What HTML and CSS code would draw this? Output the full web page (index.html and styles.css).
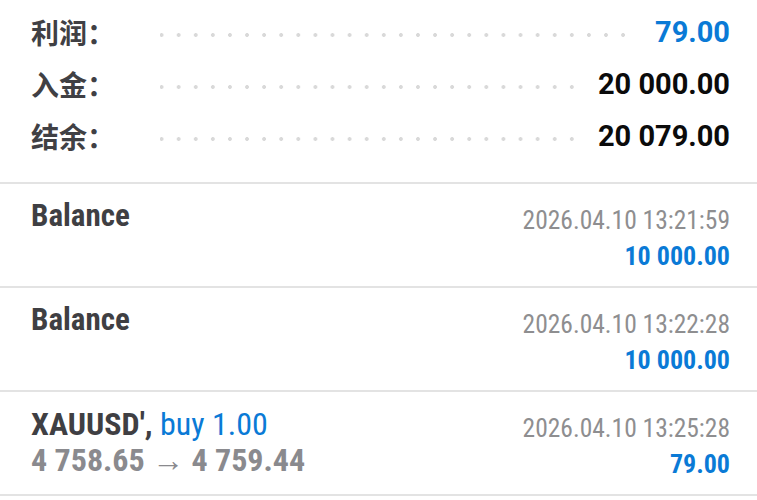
FILE: index.html
```html
<!DOCTYPE html>
<html lang="zh">
<head>
<meta charset="utf-8">
<link rel="stylesheet" href="styles.css">
</head>
<body>
<div class="summary">
  <div class="srow">
    <span class="slabel">利润：</span>
    <span class="dots"></span>
    <span class="sval blue">79.00</span>
  </div>
  <div class="srow">
    <span class="slabel">入金：</span>
    <span class="dots"></span>
    <span class="sval">20 000.00</span>
  </div>
  <div class="srow">
    <span class="slabel">结余：</span>
    <span class="dots"></span>
    <span class="sval">20 079.00</span>
  </div>
</div>
<div class="item">
  <div class="left">
    <div class="title">Balance</div>
  </div>
  <div class="right">
    <div class="date">2026.04.10 13:21:59</div>
    <div class="amount">10 000.00</div>
  </div>
</div>
<div class="item">
  <div class="left">
    <div class="title">Balance</div>
  </div>
  <div class="right">
    <div class="date">2026.04.10 13:22:28</div>
    <div class="amount">10 000.00</div>
  </div>
</div>
<div class="item">
  <div class="left">
    <div class="title deal">XAUUSD', <span class="buy">buy 1.00</span></div>
    <div class="prices">4 758.65 → 4 759.44</div>
  </div>
  <div class="right">
    <div class="date">2026.04.10 13:25:28</div>
    <div class="amount">79.00</div>
  </div>
</div>
</body>
</html>
```

FILE: styles.css
```css
html, body {
  margin: 0;
  padding: 0;
  background: #ffffff;
}

body {
  width: 757px;
  font-family: Roboto, "Noto Sans", sans-serif;
}

.summary {
  padding: 6px 27px 20px 31px;
  border-bottom: 2px solid #e3e3e3;
}

.srow {
  display: flex;
  align-items: center;
  height: 52px;
}

.slabel {
  width: 129px;
  flex: none;
  font-family: "Noto Sans CJK SC", "Noto Sans", sans-serif;
  font-weight: 700;
  font-size: 28px;
  line-height: 52px;
  color: #404044;
}

.dots {
  flex: 1;
  height: 4px;
  margin-top: 6px;
  margin-right: 18px;
  background-image: radial-gradient(circle, #d9d9d9 1.6px, rgba(255,255,255,0) 2.2px);
  background-size: 17.1px 4px;
  background-repeat: repeat-x;
  background-position: -7px 0;
}

.sval {
  flex: none;
  font-family: Roboto, sans-serif;
  font-weight: 700;
  font-size: 29px;
  line-height: 52px;
  color: #0b0b0b;
}

.blue {
  color: #0a7ad6;
}

.item {
  display: flex;
  justify-content: space-between;
  height: 102px;
  padding: 0 27px 0 31px;
  border-bottom: 2px solid #e3e3e3;
  font-family: "Roboto Condensed", Roboto, sans-serif;
  font-stretch: condensed;
}

.left {
  padding-top: 14px;
}

.title {
  font-weight: 700;
  font-size: 31px;
  line-height: 36px;
  color: #3f3f43;
}

.title.deal {
  font-size: 32px;
}

.buy {
  font-weight: 400;
  color: #0a7ad6;
}

.prices {
  font-weight: 700;
  font-size: 32px;
  line-height: 36px;
  color: #8a8a8e;
}

.right {
  padding-top: 18px;
  text-align: right;
}

.date {
  font-weight: 400;
  font-size: 25.5px;
  line-height: 36px;
  color: #8e8e90;
}

.amount {
  font-weight: 700;
  font-size: 26px;
  line-height: 36px;
  color: #0a7ad6;
}
```
